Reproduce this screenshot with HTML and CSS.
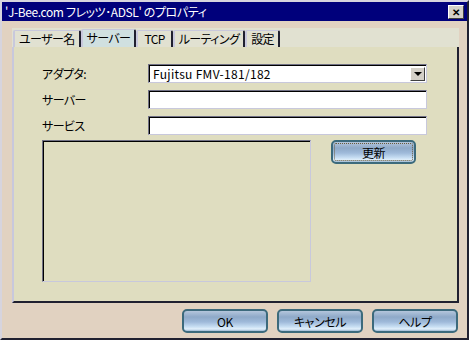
FILE: index.html
```html
<!DOCTYPE html>
<html lang="ja">
<head>
    <meta charset="UTF-8">
    <title>'J-Bee.com フレッツ･ADSL' のプロパティ</title>
    <link rel="stylesheet" href="styles.css">
</head>
<body>
    <div class="window">
        <div class="titlebar">
            <span class="title">'J-Bee.com フレッツ･ADSL' のプロパティ</span>
            <span class="close-btn">&#x2715;</span>
        </div>
        <div class="dialog-body">
            <!-- tab strip -->
            <div class="tabs">
                <div class="tab">ユーザー名</div>
                <div class="tab is-active">サーバー</div>
                <div class="tab tab-wide">TCP</div>
                <div class="tab">ルーティング</div>
                <div class="tab">設定</div>
            </div>
            <div class="panel">
                <div class="form-grid">
                    <label class="field-label">アダプタ:</label>
                    <div class="combo">
                        <span class="combo-text">Fujitsu FMV-181/182</span>
                        <span class="combo-btn"><span class="arrow"></span></span>
                    </div>
                    <label class="field-label">サーバー</label>
                    <div class="text-input"></div>
                    <label class="field-label">サービス</label>
                    <div class="text-input"></div>
                </div>
                <div class="list-row">
                    <div class="listbox"></div>
                    <button class="btn is-focused" type="button">更新</button>
                </div>
            </div>
            <div class="footer">
                <button class="btn" type="button">OK</button>
                <button class="btn" type="button">キャンセル</button>
                <button class="btn" type="button">ヘルプ</button>
            </div>
        </div>
    </div>
</body>
</html>
```

FILE: styles.css
```css
:root {
    --title-bg: #00007b;
    --window-bg: #e1d2c1;
    --strip-bg: #e1e1d1;
    --panel-bg: #dfddc0;
    --tab-active: #d0e0e0;
    --edge-light: #c8c8dc;
    --edge-dark: #202030;
    --btn-border: #3c6a7c;
}
body {
    margin: 0;
    background: var(--window-bg);
}
.window {
    width: 469px;
    height: 340px;
    box-sizing: border-box;
    border: 2px solid;
    border-color: #d6d4de var(--edge-dark) var(--edge-dark) #d6d4de;
    background: var(--window-bg);
    display: flex;
    flex-direction: column;
    font-family: "Noto Sans CJK JP", sans-serif;
    font-size: 12px;
    font-feature-settings: "palt";
    color: #000;
}
.titlebar {
    height: 19px;
    background: var(--title-bg);
    color: #fff;
    display: flex;
    align-items: center;
    justify-content: space-between;
    padding: 0 3px 0 3px;
}
.title {
    font-size: 12px;
    line-height: 19px;
    letter-spacing: -0.4px;
}
.close-btn {
    width: 14px;
    height: 12px;
    background: #d4d0c8;
    color: #000;
    border: 1px solid;
    border-color: #fff #404040 #404040 #fff;
    font-size: 10px;
    font-weight: bold;
    line-height: 12px;
    text-align: center;
}
.dialog-body {
    flex: 1;
    display: flex;
    flex-direction: column;
    padding: 7px 8px 0 10px;
}
.tabs {
    display: flex;
    height: 19px;
    background: var(--strip-bg);
    align-items: flex-end;
    padding-left: 1px;
}
.tab {
    height: 16px;
    line-height: 16px;
    padding: 0 4px;
    font-size: 12px;
    letter-spacing: -0.6px;
    border-top: 1px solid var(--edge-light);
    border-left: 2px solid var(--edge-light);
    border-right: 2px solid var(--edge-dark);
    border-radius: 2px 2px 0 0;
}
.tab.is-active {
    background: var(--tab-active);
    height: 17px;
}
.tab-wide {
    padding: 0 6px;
}
.panel {
    height: 256px;
    box-sizing: border-box;
    background: var(--panel-bg);
    border-left: 2px solid var(--edge-light);
    border-right: 2px solid var(--edge-dark);
    border-bottom: 2px solid var(--edge-dark);
    padding: 17px 0 0 28px;
}
.form-grid {
    display: grid;
    grid-template-columns: 106px 279px;
    grid-auto-rows: 19px;
    row-gap: 7px;
    align-items: center;
}
.field-label {
    font-size: 12px;
    letter-spacing: -0.6px;
}
.combo, .text-input {
    height: 19px;
    box-sizing: border-box;
    background: #fff;
    border: 1px solid;
    border-color: #707084 var(--edge-light) var(--edge-light) #707084;
    box-shadow: inset 1px 1px 0 #000;
}
.combo {
    display: flex;
    align-items: center;
    justify-content: space-between;
    padding: 0 1px 0 4px;
}
.combo-text {
    font-size: 12px;
    letter-spacing: 0.3px;
}
.combo-btn {
    width: 13px;
    height: 12px;
    background: #d4d0c8;
    border: 1px solid;
    border-color: #fff #404040 #404040 #fff;
    display: flex;
    align-items: center;
    justify-content: center;
}
.arrow {
    width: 0;
    height: 0;
    border-left: 4px solid transparent;
    border-right: 4px solid transparent;
    border-top: 4px solid #000;
}
.list-row {
    display: flex;
    align-items: flex-start;
    margin-top: 5px;
}
.listbox {
    width: 269px;
    height: 142px;
    box-sizing: border-box;
    border: 1px solid;
    border-color: #707084 var(--edge-light) var(--edge-light) #707084;
    box-shadow: inset 1px 1px 0 #000;
}
.btn {
    width: 86px;
    height: 24px;
    box-sizing: border-box;
    border: 2px solid var(--btn-border);
    border-radius: 5px;
    background: linear-gradient(to bottom, #b4c6dc 0%, #8ea9c8 30%, #9fbada 55%, #c6ddf2 78%, #e2f0fb 90%, #9ab6d2 100%);
    font-family: inherit;
    font-size: 12px;
    font-feature-settings: "palt";
    letter-spacing: -0.4px;
    color: #000;
    padding: 0;
    cursor: pointer;
}
.btn.is-focused {
    width: 85px;
    margin-left: 20px;
    outline: 1px dotted #6a5a3a;
    outline-offset: -4px;
}
.footer {
    display: flex;
    justify-content: flex-end;
    gap: 9px;
    padding: 6px 1px 0 0;
}
```
